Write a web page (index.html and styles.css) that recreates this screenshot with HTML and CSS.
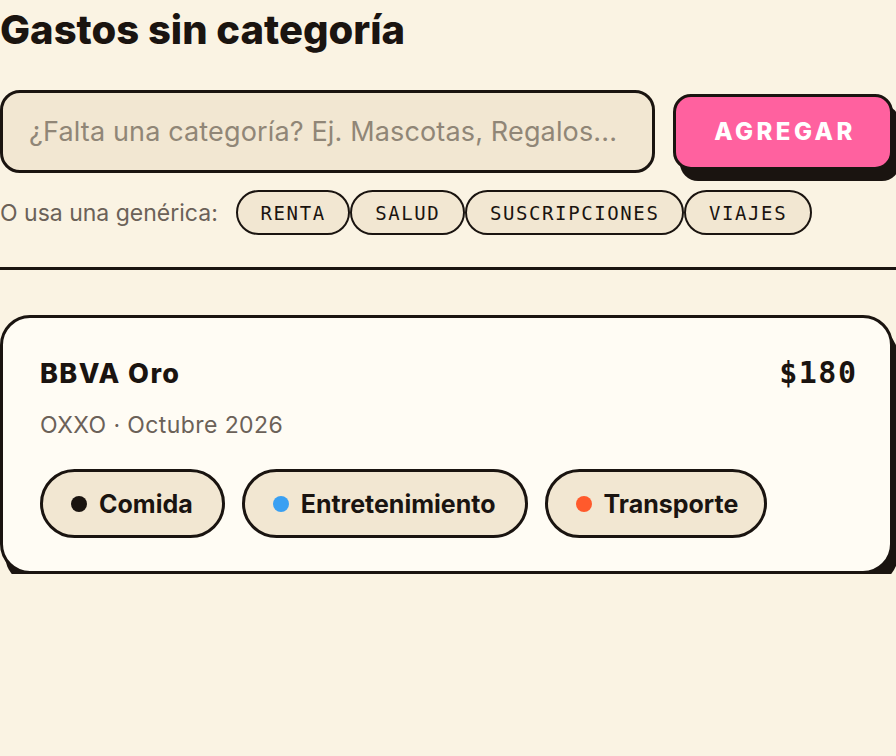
FILE: index.html
```html
<!DOCTYPE html>
<html lang="es">
<head>
<meta charset="utf-8">
<title>Gastos sin categoría</title>
<link rel="stylesheet" href="styles.css">
</head>
<body>
<main class="page">
  <h1 class="title">Gastos sin categoría</h1>
  <form class="add-row">
    <input class="add-input" type="text" placeholder="¿Falta una categoría? Ej. Mascotas, Regalos...">
    <button class="add-btn" type="button">AGREGAR</button>
  </form>
  <div class="generic-row">
    <span class="generic-label">O usa una genérica:</span>
    <div class="chips">
      <button class="chip" type="button">RENTA</button>
      <button class="chip" type="button">SALUD</button>
      <button class="chip" type="button">SUSCRIPCIONES</button>
      <button class="chip" type="button">VIAJES</button>
    </div>
  </div>
  <hr class="rule">
  <article class="card">
    <div class="card-head">
      <div class="card-info">
        <h2 class="card-title">BBVA Oro</h2>
        <p class="card-sub">OXXO · Octubre 2026</p>
      </div>
      <div class="card-amount">$180</div>
    </div>
    <div class="cats">
      <button class="cat" type="button"><span class="dot dot-black"></span>Comida</button>
      <button class="cat" type="button"><span class="dot dot-blue"></span>Entretenimiento</button>
      <button class="cat" type="button"><span class="dot dot-orange"></span>Transporte</button>
    </div>
  </article>
</main>
</body>
</html>
```

FILE: styles.css
```css
* { box-sizing: border-box; }
html, body {
  margin: 0;
  background: #faf3e3;
  color: #1a1410;
  font-family: "Inter", "Liberation Sans", sans-serif;
}
.page {
  width: 893px;
  padding: 0;
}
.title {
  margin: 0;
  padding-top: 7px;
  font-size: 40px;
  line-height: 46px;
  font-weight: 800;
  letter-spacing: 0;
}
.add-row {
  display: flex;
  align-items: center;
  gap: 18px;
  margin: 37px 0 0;
}
.add-input {
  flex: 1;
  height: 83px;
  border: 3.5px solid #1a1410;
  border-radius: 20px;
  background: #f2e7d2;
  padding: 0 26px;
  font-family: "Inter", "Liberation Sans", sans-serif;
  font-size: 27px;
  letter-spacing: 0.15px;
  color: #1a1410;
  outline: none;
}
.add-input::placeholder { color: #908677; }
.add-btn {
  width: 220px;
  height: 76px;
  border: 3px solid #1a1410;
  border-radius: 18px;
  background: #ff619f;
  color: #fff;
  font-family: "Inter", "Liberation Sans", sans-serif;
  font-weight: 800;
  font-size: 24px;
  letter-spacing: 3.4px;
  padding: 0 0 0 4px;
  box-shadow: 7px 11px 0 #1a1410;
}
.generic-row {
  display: flex;
  align-items: center;
  gap: 18px;
  margin-top: 17px;
}
.generic-label {
  font-size: 23px;
  color: #6b6158;
  letter-spacing: 0;
}
.chips { display: flex; gap: 0; }
.chip {
  height: 45px;
  padding: 0 22.75px;
  border: 2px solid #1a1410;
  border-radius: 999px;
  background: #f2e7d2;
  color: #1a1410;
  font-family: "DejaVu Sans Mono", "Liberation Mono", monospace;
  font-size: 19px;
  letter-spacing: 1.6px;
}
.rule {
  margin: 32px 0 0;
  border: 0;
  height: 3px;
  background: #1a1410;
  width: 896px;
}
.card {
  margin-top: 45px;
  background: #fffcf4;
  border: 3.5px solid #1a1410;
  border-radius: 30px;
  box-shadow: 5px 11px 0 #1a1410;
  padding: 40px 34px 33px 37px;
}
.card-head {
  display: flex;
  justify-content: space-between;
  align-items: flex-start;
}
.card-title {
  margin: 0;
  font-size: 27px;
  line-height: 32px;
  font-weight: 800;
  letter-spacing: 1.4px;
}
.card-sub {
  margin: 21px 0 0;
  font-size: 23px;
  line-height: 28px;
  color: #6b6158;
  letter-spacing: 0.4px;
}
.card-amount {
  font-family: "DejaVu Sans Mono", "Liberation Mono", monospace;
  font-weight: 700;
  font-size: 30px;
  line-height: 40px;
  letter-spacing: 1.5px;
  margin-right: -1.5px;
  margin-top: -5px;
}
.cats {
  display: flex;
  gap: 17px;
  margin-top: 30px;
}
.cat {
  display: flex;
  align-items: center;
  gap: 12px;
  height: 69px;
  padding: 0 29px 0 28px;
  border: 3.5px solid #1a1410;
  border-radius: 999px;
  background: #f2e7d2;
  color: #1a1410;
  font-family: "Inter", "Liberation Sans", sans-serif;
  font-size: 25px;
  font-weight: 700;
  letter-spacing: 0;
}
.cat:last-child { padding-right: 26px; }
.dot {
  width: 16px;
  height: 16px;
  border-radius: 50%;
  flex: none;
}
.dot-black { background: #1a1410; }
.dot-blue { background: #3aa0f2; }
.dot-orange { background: #ff5a2c; }
```
